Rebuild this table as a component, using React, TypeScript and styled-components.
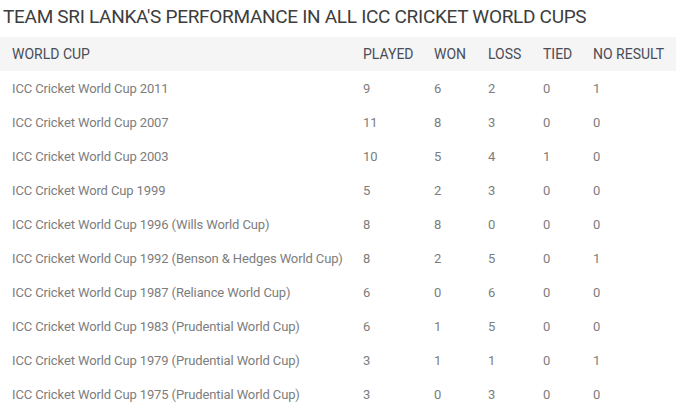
import React from "react";
import styled, { createGlobalStyle } from "styled-components";

const Global = createGlobalStyle`
  html, body { margin: 0; padding: 0; background: #ffffff; }
  body { font-family: Roboto, "Open Sans", "Liberation Sans", sans-serif; }
`;

const Page = styled.div`
  width: 676px;
  padding: 0;
`;

const Title = styled.h2`
  margin: 0;
  padding: 5px 0 0 3px;
  height: 32px;
  box-sizing: border-box;
  font-size: 19px;
  font-weight: 400;
  line-height: 24px;
  color: #3d3d3d;
  letter-spacing: -0.3px;
`;

const Table = styled.div`
  display: flex;
  flex-direction: column;
  margin-top: 5px;
`;

const Row = styled.div<{ $head?: boolean }>`
  display: grid;
  grid-template-columns: 351px 71px 54px 55px 50px 95px;
  height: 34px;
  align-items: center;
  background: ${(p) => (p.$head ? "#f5f5f5" : "transparent")};
  color: ${(p) => (p.$head ? "#4a4d57" : "#7d7d7d")};
  font-size: ${(p) => (p.$head ? "14px" : "13px")};
  letter-spacing: ${(p) => (p.$head ? "0" : "-0.12px")};
`;

const Cell = styled.div`
  padding-left: 12px;
  white-space: nowrap;
`;

const rows: [string, number, number, number, number, number][] = [
  ["ICC Cricket World Cup 2011", 9, 6, 2, 0, 1],
  ["ICC Cricket World Cup 2007", 11, 8, 3, 0, 0],
  ["ICC Cricket World Cup 2003", 10, 5, 4, 1, 0],
  ["ICC Cricket Word Cup 1999", 5, 2, 3, 0, 0],
  ["ICC Cricket World Cup 1996 (Wills World Cup)", 8, 8, 0, 0, 0],
  ["ICC Cricket World Cup 1992 (Benson & Hedges World Cup)", 8, 2, 5, 0, 1],
  ["ICC Cricket World Cup 1987 (Reliance World Cup)", 6, 0, 6, 0, 0],
  ["ICC Cricket World Cup 1983 (Prudential World Cup)", 6, 1, 5, 0, 0],
  ["ICC Cricket World Cup 1979 (Prudential World Cup)", 3, 1, 1, 0, 1],
  ["ICC Cricket World Cup 1975 (Prudential World Cup)", 3, 0, 3, 0, 0],
];

const heads = ["WORLD CUP", "PLAYED", "WON", "LOSS", "TIED", "NO RESULT"];

export default function App() {
  return (
    <Page>
      <Global />
      <Title>TEAM SRI LANKA'S PERFORMANCE IN ALL ICC CRICKET WORLD CUPS</Title>
      <Table>
        <Row $head>
          {heads.map((h) => (
            <Cell key={h}>{h}</Cell>
          ))}
        </Row>
        {rows.map((r) => (
          <Row key={r[0]}>
            {r.map((v, i) => (
              <Cell key={i}>{v}</Cell>
            ))}
          </Row>
        ))}
      </Table>
    </Page>
  );
}
